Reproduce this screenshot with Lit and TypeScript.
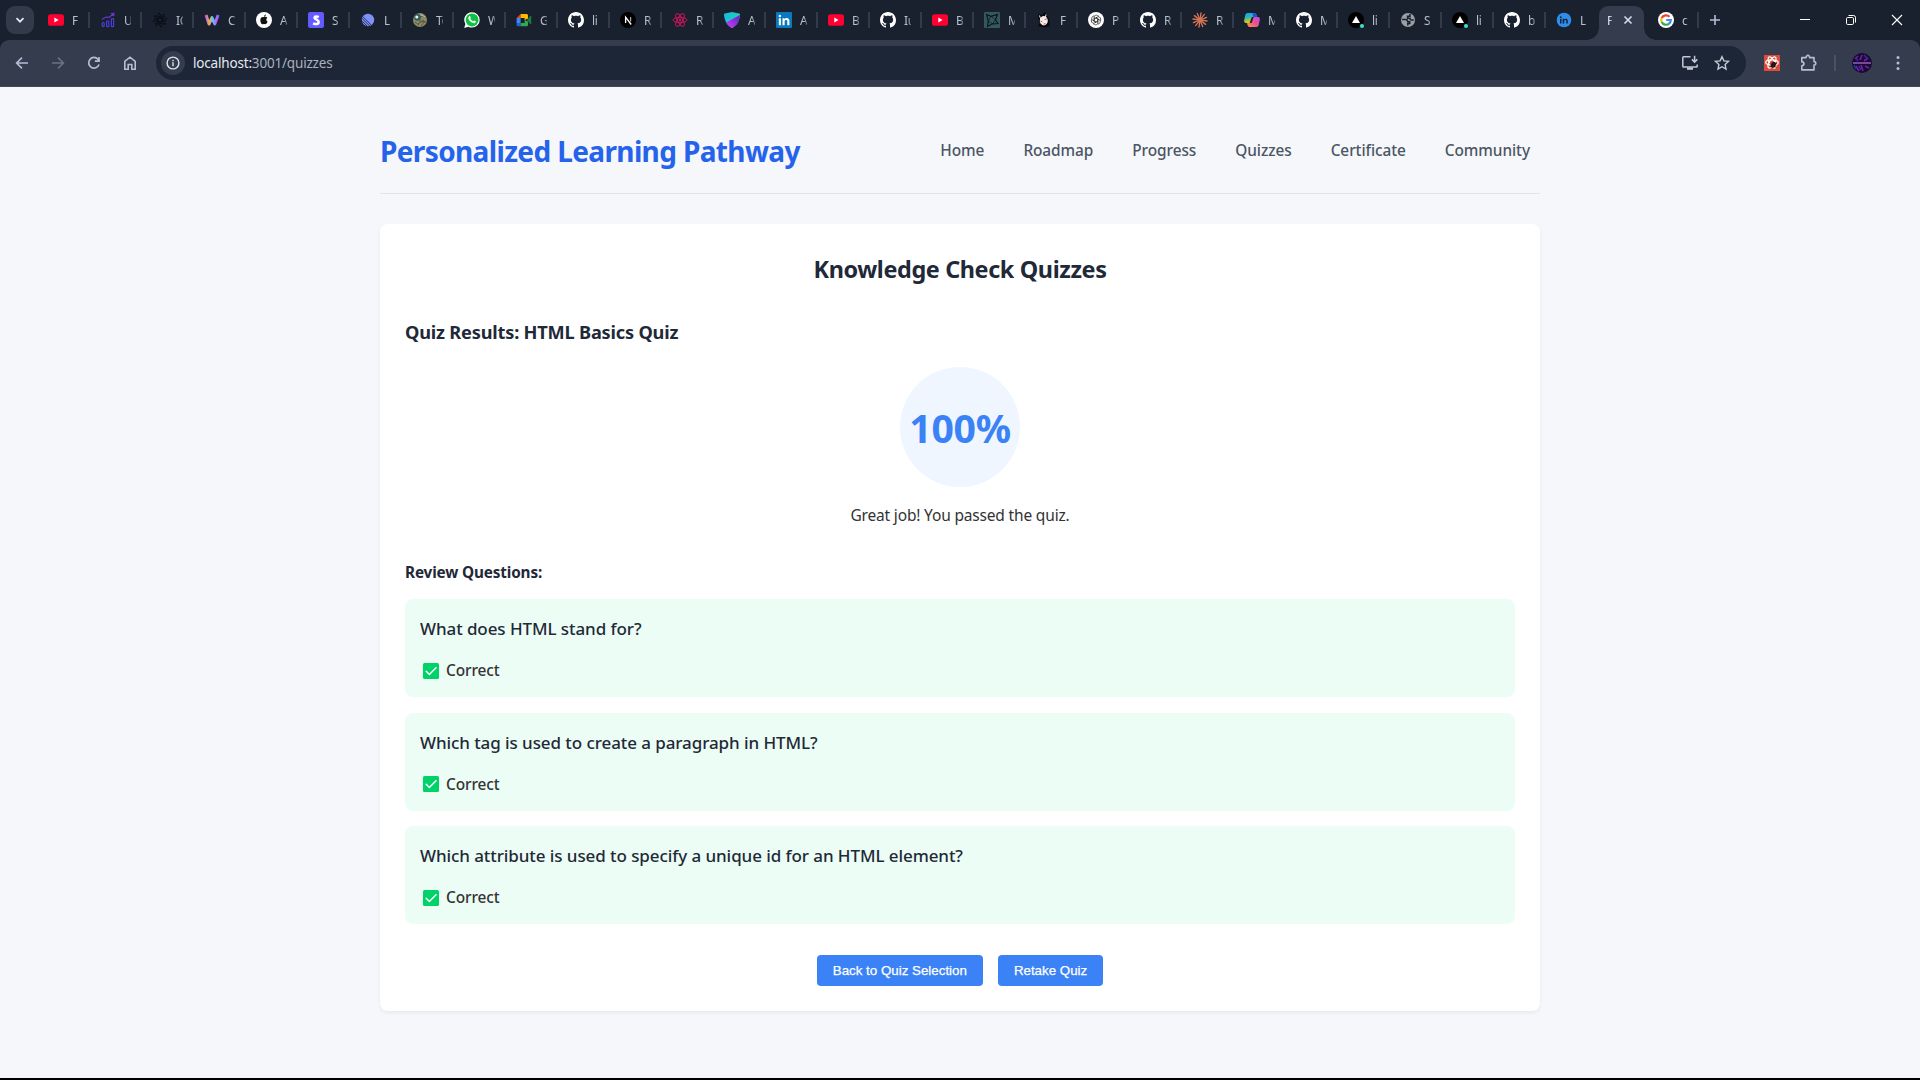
import { LitElement, html, svg, css, TemplateResult } from 'lit';
import { customElement } from 'lit/decorators.js';

const ghMark = svg`<path fill="#fff" d="M8 0C3.58 0 0 3.58 0 8c0 3.54 2.29 6.53 5.47 7.59.4.07.55-.17.55-.38 0-.19-.01-.82-.01-1.49-2.01.37-2.53-.49-2.69-.94-.09-.23-.48-.94-.82-1.13-.28-.15-.68-.52-.01-.53.63-.01 1.08.58 1.23.82.72 1.21 1.87.87 2.33.66.07-.52.28-.87.51-1.07-1.78-.2-3.64-.89-3.64-3.95 0-.87.31-1.59.82-2.15-.08-.2-.36-1.02.08-2.12 0 0 .67-.21 2.2.82.64-.18 1.32-.27 2-.27s1.36.09 2 .27c1.53-1.04 2.2-.82 2.2-.82.44 1.1.16 1.92.08 2.12.51.56.82 1.27.82 2.15 0 3.07-1.87 3.75-3.65 3.95.29.25.54.73.54 1.48 0 1.07-.01 1.93-.01 2.2 0 .21.15.46.55.38A8.01 8.01 0 0 0 16 8c0-4.42-3.58-8-8-8z"/>`;

const spokes = (n: number, draw: (deg: number) => unknown) =>
  Array.from({ length: n }, (_, i) => draw((i * 360) / n));

const icons: Record<string, TemplateResult> = {
  youtube: svg`<rect y="2.2" width="16" height="11.6" rx="2.6" fill="#ff0033"/><path d="M6.3 5.6v4.8L10.6 8z" fill="#fff"/>`,
  chart: svg`<g fill="none" stroke="#4b3bd8" stroke-width="1.2"><rect x="2.2" y="10.6" width="2" height="4" rx="1"/><rect x="6.6" y="9" width="2.2" height="5.6" rx=".6"/><rect x="11.4" y="6.6" width="2.2" height="8" rx=".4"/><path d="M1.8 7.4l4-2.3 3 .2L13.6 2M11 1.6l3-.2-.4 2.8" stroke="#6a35c8"/></g>`,
  spiral: svg`<g fill="none" stroke="#070b11" stroke-width="1.5" stroke-dasharray="1.4 .7">${spokes(8, (a) => svg`<path transform="rotate(${a} 8 8)" d="M10 7.500Q10.600 3.400 6.200 1.200"/>`)}</g>`,
  wave: svg`<defs><linearGradient id="wv" gradientUnits="userSpaceOnUse" x1="1" x2="15" y1="0" y2="0"><stop offset="0" stop-color="#a35bff"/><stop offset=".3" stop-color="#ffa24d"/><stop offset=".55" stop-color="#58c7f7"/><stop offset=".8" stop-color="#c45cff"/><stop offset="1" stop-color="#5b6cff"/></linearGradient></defs><path d="M2 3l3 9L8 5.6l2.8 6.4L14.2 3" fill="none" stroke="url(#wv)" stroke-width="3" stroke-linejoin="round"/>`,
  apple: svg`<circle cx="8" cy="8" r="8" fill="#fff"/><path d="M8 5.2c1-.7 2.5-.7 3.3.5-1.5 1.1-1.2 3.2.3 3.9-.6 1.7-1.7 3-2.6 2.6-.7-.3-1.2-.3-1.9 0C5.6 12.6 4 9.8 4.4 7.4c.4-2.2 2.2-2.8 3.6-2.2zM8 4.6c0-1.2.8-2 1.8-2.2.1 1.200-.7 2.100-1.800 2.200z" fill="#111"/>`,
  stripe: svg`<rect width="16" height="16" rx="2" fill="#635bff"/><path d="M10.7 5.1C9.4 4.4 6.7 4 6.5 5.7c-.1 1.900 4.200 1.500 4.200 4.300 0 2.500-3.400 2.500-5.600 1.400" fill="none" stroke="#fff" stroke-width="2.5"/>`,
  linear: svg`<circle cx="8" cy="8" r="6.2" fill="#8091f5"/><path d="M1.7 6l8.300 8.300M1.800 8.700l5.500 5.500M2.400 4.200l9.200 9.200" stroke="#26365e" stroke-width="1"/>`,
  globeart: svg`<circle cx="8" cy="8" r="7" fill="#8d8b62"/><path d="M8 5l5-2M7 9l7 1M6 12l6-4M9 14l4-5M3 10l4 3" stroke="#4e513c" stroke-width=".9"/><circle cx="5.6" cy="5.4" r="3.3" fill="#2e5f68"/><circle cx="4.8" cy="5" r="1.5" fill="#f2f4ea"/><path d="M8 2.5l5 2" stroke="#c9c59c"/>`,
  whatsapp: svg`<path d="M8 .2A7.700 7.700 0 0 1 8 15.600a8 8 0 0 1-3.600-.9L.2 15.900l1.200-4A7.700 7.700 0 0 1 8 .2z" fill="#fff"/><circle cx="8.050" cy="7.900" r="6.500" fill="#0fc143"/><path d="M5.300 4.200c.9-.6 1.300 1 1.500 1.600-.1.500-.6.700-.5 1 .6 1.200 1.500 2 2.700 2.500.5 0 .7-1 1.200-.9.600.2 1.700.8 1.700 1-.1 1.400-1.500 2-2.600 1.700C6.500 10.400 4.700 8.200 4.300 6.300c0-.9.500-1.700 1-2.100z" fill="#fff"/>`,
  meet: svg`<path d="M.6 6L4.600 2v4z" fill="#ea4335"/><path d="M.6 6h4v5h-4z" fill="#4285f4"/><path d="M.6 11h4v3.300H2A1.400 1.400 0 0 1 .6 13z" fill="#1967d2"/><path d="M4.600 2h6.200A1.400 1.400 0 0 1 12 3.300V6.500L8.600 8V6h-4z" fill="#ffba00"/><path d="M4.600 11h4V8L12 9.500V13a1.400 1.400 0 0 1-1.300 1.300H4.600z" fill="#34a853"/><path d="M11 8l3.400-4.200c.4-.3.800 0 .8.400v7.600c0 .4-.4.700-.8.400z" fill="#188038"/>`,
  github: ghMark,
  next: svg`<circle cx="8" cy="8" r="8" fill="#000"/><path d="M5.600 11V5.200l5.600 7.300" fill="none" stroke="#fff" stroke-width="1.300"/><path d="M10.600 5v4.500" stroke="#aaa" stroke-width="1.200"/>`,
  react: svg`<g fill="none" stroke="#c2185b" stroke-width="1"><ellipse cx="8" cy="8" rx="7" ry="2.700"/><ellipse cx="8" cy="8" rx="7" ry="2.700" transform="rotate(60 8 8)"/><ellipse cx="8" cy="8" rx="7" ry="2.700" transform="rotate(120 8 8)"/></g><circle cx="8" cy="8" r="1.400" fill="#c2185b"/>`,
  shield: svg`<defs><linearGradient id="sh" x1="0" x2="1" y1="0" y2=".4"><stop offset="0" stop-color="#19b9e6"/><stop offset="1" stop-color="#1fd0b0"/></linearGradient><linearGradient id="sp" x1="1" x2="0" y1="0" y2="1"><stop offset="0" stop-color="#5a22c8"/><stop offset="1" stop-color="#d93cf5"/></linearGradient></defs><path d="M0 1.800L8 0l8 1.800C15.800 8.500 13 13.500 8 16 3 13.500.2 8.500 0 1.800z" fill="url(#sh)"/><path d="M15.800 3C15.400 9 12.800 13.600 8 16c-2.500-1.200-4.400-3.300-5.700-5.600z" fill="url(#sp)"/>`,
  linkedin: svg`<rect width="16" height="16" rx="1" fill="#0a7abf"/><path d="M2.800 6.200h2.100v7H2.800zM6.500 6.200h2v1c1.200-1.800 4.900-1.600 4.900 1.800v4.200h-2.100V9.500c0-2-2.700-1.800-2.700 0v3.700H6.500z" fill="#fff"/><circle cx="3.850" cy="3.900" r="1.250" fill="#fff"/>`,
  star4: svg`<rect width="16" height="16" rx="1" fill="#33595e"/><path d="M2.500 2.500L7 4.300l6.500-1.800-2 5.500 2.500 3.500-5.500.3L3.500 14.500l.8-5.300z" fill="none" stroke="#0b1718" stroke-width="1.200"/><path d="M4.300 9.200L7 4.300l4.500 3.700-3 3.800z" fill="none" stroke="#0b1718" stroke-width=".7"/>`,
  fox: svg`<path d="M2.500 1.500l3 2L9 0l1 3c3 2 4 7 3.500 11L9 15.500 2 14l2-3c-1.800-3-2-6-1.500-9.500z" fill="#06080b"/><ellipse cx="7.800" cy="8.700" rx="4" ry="4.700" fill="#f3ece8"/><path d="M3.500 3.500L5 8M10 2.500l-.6 3" stroke="#f3ece8" stroke-width="1"/><path d="M4.600 9l1.800 1M8.600 7.500l2.300-.6M7.500 12l2-.3" stroke="#c4545c" stroke-width="1"/>`,
  openai: svg`<circle cx="8" cy="8" r="8" fill="#fff"/><g fill="none" stroke="#333" stroke-width=".75">${spokes(6, (a) => svg`<path transform="rotate(${a} 8 8)" d="M6.200 9V5.300a2.100 2.100 0 0 1 3.200-1.800l1.600.9M6.200 6.900l3-1.700"/>`)}</g>`,
  claude: svg`<g stroke="#d97757" stroke-width="1.300" stroke-linecap="round">${spokes(12, (a) => svg`<path transform="rotate(${a + 8} 8 8)" d="M8 7V.9"/>`)}</g>`,
  copilot: svg`<defs><linearGradient id="ca" x1="0" x2=".3" y1="0" y2="1"><stop offset="0" stop-color="#1a9bf0"/><stop offset=".45" stop-color="#28b5c8"/><stop offset=".75" stop-color="#9bc83a"/><stop offset="1" stop-color="#f7c600"/></linearGradient><linearGradient id="cb" x1="1" x2="0" y1="0" y2="1"><stop offset="0" stop-color="#b44df0"/><stop offset=".5" stop-color="#f0508c"/><stop offset="1" stop-color="#ff9b3d"/></linearGradient></defs><path d="M3.500 1h7c1 0 1.500.7 2 2l.6 2H9.300L7 11H2C.3 11-.2 9.500.3 7.500l1-4.500C1.600 1.700 2.300 1 3.500 1z" fill="url(#ca)"/><path d="M12.500 15h-7c-1 0-1.500-.7-2-2l-.5-2h3.700L9 5h5c1.700 0 2.200 1.500 1.700 3.500l-1 4.500c-.3 1.300-1 2-2.200 2z" fill="url(#cb)"/><path d="M8.500 1h2c1 0 1.600.7 2 2l.6 2H9z" fill="#1b55d8"/><path d="M9.600 5L7.600 11 5.600 11 7.800 5z" fill="#19212e"/>`,
  vercel: svg`<circle cx="8" cy="8" r="8" fill="#000"/><path d="M8 4l4 7H4z" fill="#fff"/><circle cx="14" cy="14" r="2.600" fill="#19212e"/><circle cx="14" cy="14" r="2" fill="#45dec4"/>`,
  globe: svg`<circle cx="8" cy="8" r="7" fill="#9aa0a6"/><path d="M2 7.500h3.500c1.800 0 2.300.8 2.300 2.300h2v1.800H7.800V13.500M10 2v2.200H7.600v2H10c0 1.500 1 2.200 3.800 1.800" fill="none" stroke="#19212e" stroke-width="1.500"/>`,
  inround: svg`<circle cx="8" cy="8" r="7.300" fill="#2f8fe8"/><path d="M4 6.800h1.500v4.700H4zM6.700 6.800h1.400v.7c.9-1.300 3.700-1.200 3.700 1.300v2.700h-1.500V9.200c0-1.500-2-1.400-2 0v2.300H6.700z" fill="#0e2440"/><circle cx="4.750" cy="5.200" r=".9" fill="#0e2440"/>`,
  google: svg`<circle cx="8" cy="8" r="8" fill="#fff"/><g fill="none" stroke-width="2.200"><path d="M11.500 4.800A4.800 4.800 0 0 0 3.700 6" stroke="#ea4335"/><path d="M3.700 5.900a4.800 4.800 0 0 0 0 4.200" stroke="#fbbc05"/><path d="M3.700 10a4.800 4.800 0 0 0 7.400 1.600" stroke="#34a853"/><path d="M11 11.700A4.800 4.800 0 0 0 12.800 8H8.200" stroke="#4285f4"/></g>`,
};

const tabs: [string, string][] = [
  ['youtube', 'F'], ['chart', 'U'], ['spiral', 'IC'], ['wave', 'C'], ['apple', 'A'], ['stripe', 'S'],
  ['linear', 'L'], ['globeart', 'To'], ['whatsapp', 'W'], ['meet', 'G'], ['github', 'li'], ['next', 'R'],
  ['react', 'R'], ['shield', 'A'], ['linkedin', 'A'], ['youtube', 'B'], ['github', 'Iu'], ['youtube', 'B'],
  ['star4', 'M'], ['fox', 'F'], ['openai', 'P'], ['github', 'R'], ['claude', 'R'], ['copilot', 'M'],
  ['github', 'M'], ['vercel', 'li'], ['globe', 'S'], ['vercel', 'li'], ['github', 'b'], ['inround', 'L'],
];

@customElement('browser-chrome')
export class BrowserChrome extends LitElement {
  static styles = css`
    :host { display: block; height: 87px; background: #19212e; font-family: 'Noto Sans', 'Open Sans', sans-serif; }
    * { box-sizing: border-box; }
    svg { display: block; flex: none; overflow: visible; }
    .strip { display: flex; height: 40px; align-items: center; padding-left: 6px; }
    .search { width: 28px; height: 28px; border-radius: 9px; background: #333b4b; display: grid; place-items: center; margin-right: 6px; }
    .tab { display: flex; align-items: center; width: 52px; padding-left: 8px; height: 28px; flex: none; }
    .label { width: 7px; margin-left: 8px; overflow: hidden; white-space: nowrap; font-size: 12px; line-height: 20px; padding-top: 1px; color: #b9c2d3; letter-spacing: -0.3px; -webkit-mask-image: linear-gradient(90deg, #000 55%, rgba(0,0,0,.45)); mask-image: linear-gradient(90deg, #000 55%, rgba(0,0,0,.45)); }
    .sep { width: 2px; height: 16px; background: #333b4b; margin-left: 9px; flex: none; }
    .last .sep { visibility: hidden; }
    .active { align-self: flex-end; position: relative; display: flex; align-items: center; width: 45px; height: 34px; margin-left: -1px; padding: 0 0 6px 8px; background: #343c4d; border-radius: 9px 9px 0 0; }
    .active::before, .active::after { content: ''; position: absolute; bottom: 0; width: 12px; height: 12px; }
    .active::before { right: 100%; background: radial-gradient(circle at 0 0, transparent 11.5px, #343c4d 12px); }
    .active::after { left: 100%; background: radial-gradient(circle at 100% 0, transparent 11.5px, #343c4d 12px); }
    .active .label { margin-left: 0; width: 5px; color: #dfe4ee; }
    .active svg { margin-left: 12px; }
    .google { padding-left: 0; width: 41px; margin-left: 14px; }
    .google .sep { margin-left: 9px; }
    .plus { margin-left: 6px; }
    .window { margin-left: auto; display: flex; gap: 30px; padding-right: 15px; }
    .bar { height: 47px; background: #343c4d; border-radius: 9px 9px 0 0; border-bottom: 1px solid #424855; display: flex; align-items: center; padding: 0 14px 0 14px; }
    .nav { display: flex; gap: 20px; }
    .omni { width: 1590px; height: 34px; margin-left: 18px; border-radius: 17px; background: #1d2636; display: flex; align-items: center; padding: 0 16px 0 5px; }
    .info { width: 24px; height: 24px; border-radius: 50%; background: #343c4d; display: grid; place-items: center; }
    .url { margin-left: 8px; font-size: 13.5px; letter-spacing: -0.18px; color: #a9b1bf; }
    .url b { font-weight: 400; color: #e6e9f0; }
    .acts { margin-left: auto; display: flex; gap: 16px; }
    .ext { display: flex; align-items: center; margin-left: 18px; }
    .ext .puzzle { margin-left: 18px; }
    .bsep { width: 2px; height: 16px; background: #4a5163; margin-left: 16px; }
    .avatar { margin-left: 16px; }
    .dots { margin-left: 18px; }
  `;

  private ic(name: string) {
    return html`<svg width="16" height="16" viewBox="0 0 16 16">${icons[name]}</svg>`;
  }

  render() {
    return html`
      <div class="strip">
        <div class="search"><svg width="10" height="10" viewBox="0 0 10 10"><path d="M1.5 3.2L5 6.7l3.5-3.5" fill="none" stroke="#e3e8f2" stroke-width="1.7"/></svg></div>
        ${tabs.map(([icon, label], i) => html`
          <div class="tab ${i === tabs.length - 1 ? 'last' : ''}">${this.ic(icon)}<span class="label">${label}</span><span class="sep"></span></div>`)}
        <div class="active"><span class="label">F</span><svg width="8" height="8" viewBox="0 0 8 8"><path d="M.5.5l7 7m0-7l-7 7" stroke="#d9dee8" stroke-width="1.6"/></svg></div>
        <div class="tab google">${this.ic('google')}<span class="label">c</span><span class="sep"></span></div>
        <svg class="plus" width="20" height="20" viewBox="0 0 20 20"><path d="M10 5v10M5 10h10" stroke="#b4bfd6" stroke-width="1.6"/></svg>
        <div class="window">
          <svg width="16" height="16" viewBox="0 0 16 16"><path d="M3 7.5h10" stroke="#fff"/></svg>
          <svg width="16" height="16" viewBox="0 0 16 16"><rect x="3.5" y="5.5" width="7" height="7" rx="1.2" fill="none" stroke="#fff"/><path d="M5.5 3.5h5a2 2 0 0 1 2 2v5" fill="none" stroke="#fff"/></svg>
          <svg width="16" height="16" viewBox="0 0 16 16"><path d="M3 3l10 10M13 3L3 13" stroke="#fff" stroke-width="1.1"/></svg>
        </div>
      </div>
      <div class="bar">
        <div class="nav">
          <svg width="16" height="16" viewBox="0 0 16 16"><path d="M14 8H3M8 2.6L2.6 8 8 13.4" fill="none" stroke="#b4bfd6" stroke-width="1.6"/></svg>
          <svg width="16" height="16" viewBox="0 0 16 16"><path d="M2 8h11M8 2.6L13.4 8 8 13.4" fill="none" stroke="#697183" stroke-width="1.6"/></svg>
          <svg width="16" height="16" viewBox="0 0 16 16"><path d="M13 9.5A5.3 5.3 0 1 1 12 4.3l1.5 1.5" fill="none" stroke="#b4bfd6" stroke-width="1.7"/><path d="M13.8 2v4.9H8.9V5.3h3.3V2z" fill="#b4bfd6"/></svg>
          <svg width="16" height="16" viewBox="0 0 16 16"><path d="M2.8 6.3L8 2.2l5.2 4.1v7.9H9.8V9.5H6.2v4.7H2.8z" fill="none" stroke="#b4bfd6" stroke-width="1.6"/></svg>
        </div>
        <div class="omni">
          <div class="info"><svg width="14" height="14" viewBox="0 0 14 14"><circle cx="7" cy="7" r="5.9" fill="none" stroke="#dfe3ea" stroke-width="1.4"/><path d="M7 6.3v3.9M7 3.7v1.5" stroke="#dfe3ea" stroke-width="1.4"/></svg></div>
          <span class="url"><b>localhost:</b>3001/quizzes</span>
          <div class="acts">
            <svg width="16" height="16" viewBox="0 0 16 16"><path d="M8.500 1.800H1.600a.8.800 0 0 0-.8.800v8.600c0 .5.300.8.800.8h12.800c.5 0 .8-.3.800-.8V9.500" fill="none" stroke="#c4cad5" stroke-width="1.500"/><path d="M5 12.500h6v2.300H5z" fill="#c4cad5"/><path d="M12.600.8v6M9.900 4.400l2.700 2.700 2.700-2.700" fill="none" stroke="#c4cad5" stroke-width="1.500"/></svg>
            <svg width="16" height="16" viewBox="0 0 16 16"><path d="M8 1.700l1.900 4.200 4.600.5-3.400 3.100.9 4.500-4-2.300-4 2.300.9-4.500L1.500 6.400l4.600-.5z" fill="none" stroke="#c4cad5" stroke-width="1.400"/></svg>
          </div>
        </div>
        <div class="ext">
          <svg width="16" height="16" viewBox="0 0 16 16"><rect width="16" height="16" fill="#dc4b3e"/><g fill="none" stroke="#fff" stroke-width="1.200"><ellipse cx="8" cy="7.500" rx="6.300" ry="2.600"/><ellipse cx="8" cy="7.500" rx="6.300" ry="2.600" transform="rotate(60 8 7.500)"/><ellipse cx="8" cy="7.500" rx="6.300" ry="2.600" transform="rotate(120 8 7.500)"/></g><ellipse cx="9.300" cy="9.800" rx="2.400" ry="3.200" transform="rotate(35 9.300 9.800)" fill="#2b1411"/><path d="M5.500 8.500l7 4M6 12l7-3.500" stroke="#2b1411" stroke-width=".8"/></svg>
          <svg class="puzzle" width="20" height="20" viewBox="0 0 20 20"><path d="M3.800 4.600h4.400C8 1.600 11.800 1.600 11.600 4.600h4.400v4c2.400 0 2.400 3.400 0 3.400v4.900H3.800v-4c2.900-.4 2.900-3.700 0-4z" fill="none" stroke="#b4bfd6" stroke-width="1.600" stroke-linejoin="round"/></svg>
          <span class="bsep"></span>
          <svg class="avatar" width="20" height="20" viewBox="0 0 20 20"><circle cx="10" cy="10" r="10" fill="#150b33"/><path d="M3 6l3-3M8 7l2-5M12 8l4-3M4 13l3 5M9 12l2 6M13 13l4 2" fill="none" stroke="#7d1a9c" stroke-width="1.700"/><path d="M12 2l3 3M7 13l2 4M2 12l2 4M4 5l2 3" stroke="#2734a0" stroke-width="1.600"/><path d="M1 10h18" stroke="#b06ad2" stroke-width="1.300"/></svg>
          <svg class="dots" width="16" height="16" viewBox="0 0 16 16" fill="#b4bfd6"><circle cx="8" cy="2.600" r="1.500"/><circle cx="8" cy="8" r="1.500"/><circle cx="8" cy="13.400" r="1.500"/></svg>
        </div>
      </div>`;
  }
}

const links = ['Home', 'Roadmap', 'Progress', 'Quizzes', 'Certificate', 'Community'];
const questions = [
  'What does HTML stand for?',
  'Which tag is used to create a paragraph in HTML?',
  'Which attribute is used to specify a unique id for an HTML element?',
];

@customElement('app-root')
export class AppRoot extends LitElement {
  static styles = css`
    :host { display: flex; flex-direction: column; height: 1080px; overflow: hidden; background: #f5f7fb; border-bottom: 2px solid #000; box-sizing: border-box; font-family: 'Noto Sans', 'Open Sans', sans-serif; color: #333; }
    * { box-sizing: border-box; }
    h1, h2, h3, h4, p { margin: 0; }
    .page { width: 1160px; margin: 0 auto; }
    header { height: 107px; padding-top: 44px; border-bottom: 1px solid #e0e4ea; display: flex; justify-content: space-between; align-items: flex-start; }
    h1 { font-size: 28px; line-height: 41px; font-weight: 700; letter-spacing: -0.63px; color: #2563eb; }
    nav { display: flex; gap: 19px; }
    nav a { padding: 0 10px; font-size: 15.4px; line-height: 40px; font-weight: 500; letter-spacing: -0.07px; color: #4b5563; }
    .card { margin-top: 30px; height: 787px; padding: 27px 25px 25px; background: #fff; border-radius: 8px; box-shadow: 0 2px 4px rgba(0, 0, 0, 0.06); color: #1f2937; display: flex; flex-direction: column; }
    h2 { text-align: center; font-size: 23.4px; line-height: 36px; font-weight: 700; letter-spacing: -0.38px; }
    h3 { margin-top: 31px; font-size: 18.2px; line-height: 28px; font-weight: 700; letter-spacing: -0.2px; }
    .score { margin: 21px auto 0; width: 120px; height: 120px; padding-top: 2px; border-radius: 50%; background: #eff6ff; color: #3b82f6; display: flex; align-items: center; justify-content: center; font-size: 39.2px; line-height: 60px; font-weight: 700; letter-spacing: -0.3px; }
    .msg { margin-top: 15px; text-align: center; font-size: 15.5px; line-height: 27px; letter-spacing: -0.17px; color: #333; }
    h4 { margin-top: 29px; font-size: 15.3px; line-height: 28px; font-weight: 700; letter-spacing: -0.15px; }
    .list { margin-top: 13px; display: flex; flex-direction: column; gap: 15.5px; }
    .item { height: 98px; padding: 16px 15px 14px; border-radius: 8px; background: #ecfdf5; }
    .q { font-size: 17px; line-height: 27.2px; font-weight: 500; letter-spacing: -0.08px; }
    .a { margin-top: 14.8px; display: flex; align-items: center; gap: 7px; padding-left: 3px; font-size: 15.4px; line-height: 28px; font-weight: 500; letter-spacing: -0.08px; color: #333; }
    .a svg { margin-top: -1px; }
    .actions { margin-top: auto; display: flex; justify-content: center; gap: 15px; }
    button { height: 31px; padding: 0 16px; border: 0; border-radius: 4px; background: #3b82f6; color: #fff; font: 500 13.333px 'Liberation Sans', Arial, sans-serif; -webkit-text-stroke: 0.25px #fff; }
  `;

  render() {
    return html`
      <browser-chrome></browser-chrome>
      <div class="page">
        <header>
          <h1>Personalized Learning Pathway</h1>
          <nav>${links.map((l) => html`<a>${l}</a>`)}</nav>
        </header>
        <section class="card">
          <h2>Knowledge Check Quizzes</h2>
          <h3>Quiz Results: HTML Basics Quiz</h3>
          <div class="score">100%</div>
          <p class="msg">Great job! You passed the quiz.</p>
          <h4>Review Questions:</h4>
          <div class="list">
            ${questions.map((q) => html`
              <div class="item">
                <p class="q">${q}</p>
                <p class="a"><svg width="16" height="16" viewBox="0 0 16 16"><rect width="16" height="16" rx="1.5" fill="#00d26a"/><path d="M3.2 8.3l3.2 3.2 6.6-6.7" fill="none" stroke="#fff" stroke-width="1.5" stroke-linecap="round"/></svg>Correct</p>
              </div>`)}
          </div>
          <div class="actions"><button>Back to Quiz Selection</button><button>Retake Quiz</button></div>
        </section>
      </div>`;
  }
}
